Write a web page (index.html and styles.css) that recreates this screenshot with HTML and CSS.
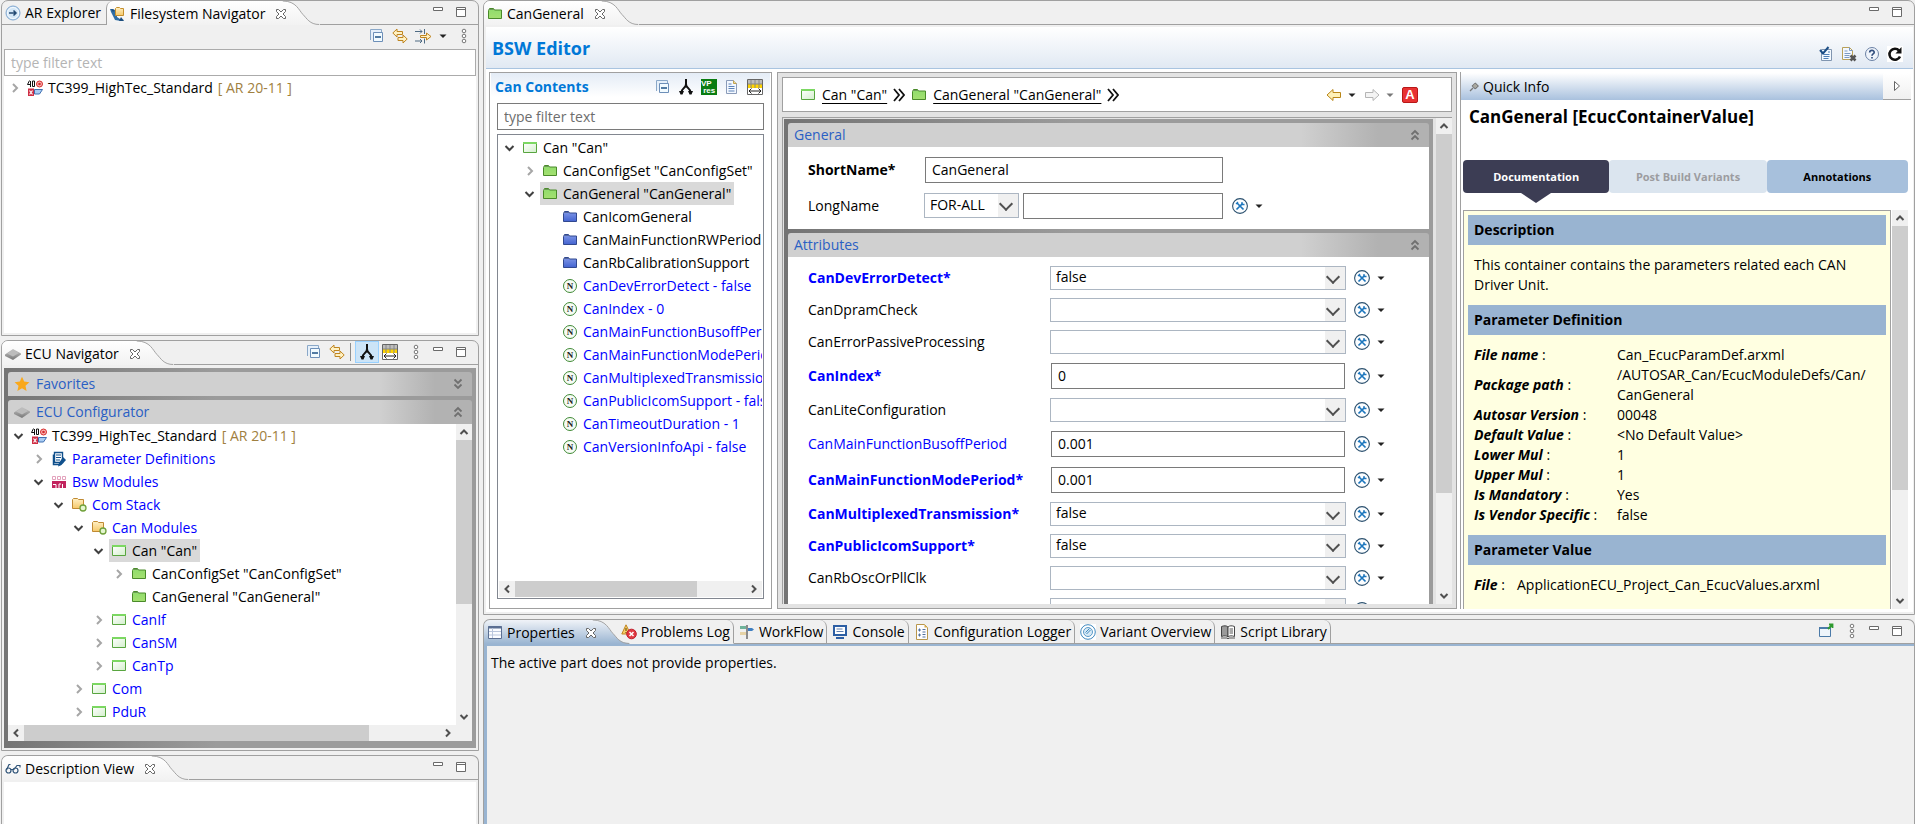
FILE: index.html
```html
<!DOCTYPE html>
<html lang="en">
<head>
<meta charset="utf-8">
<title>BSW Editor</title>
<link rel="stylesheet" href="styles.css">
</head>
<body>
<svg class="defs" aria-hidden="true">
  <defs>
    <linearGradient id="g-tab" x1="0" y1="0" x2="0" y2="1"><stop offset="0" stop-color="#fff"/><stop offset="1" stop-color="#f2f2f2"/></linearGradient>
    <linearGradient id="g-focus" x1="0" y1="0" x2="0" y2="1"><stop offset="0" stop-color="#f0f3f8"/><stop offset="1" stop-color="#99b4d1"/></linearGradient>
    <linearGradient id="g-green" x1="0" y1="0" x2="0" y2="1"><stop offset="0" stop-color="#8fdc6c"/><stop offset="1" stop-color="#a4e070"/></linearGradient>
    <linearGradient id="g-blue" x1="0" y1="0" x2="0" y2="1"><stop offset="0" stop-color="#8299e8"/><stop offset="1" stop-color="#4363d0"/></linearGradient>
    <linearGradient id="g-mod" x1="0" y1="0" x2="1" y2="1"><stop offset="0" stop-color="#fff"/><stop offset="1" stop-color="#d3efcc"/></linearGradient>
    <linearGradient id="g-yellow" x1="0" y1="0" x2="0" y2="1"><stop offset="0" stop-color="#fff0c4"/><stop offset="1" stop-color="#f5c869"/></linearGradient>
    <linearGradient id="g-chip" x1="0" y1="0" x2="0" y2="1"><stop offset="0" stop-color="#c8c8c8"/><stop offset="1" stop-color="#777"/></linearGradient>
  </defs>
  <symbol id="curve" viewBox="0 0 38 25"><path d="M0 0C14 0 17 10 21 14S28 24 38 24V25H0z" fill="url(#g-tab)"/><path d="M0 0C14 0 17 10 21 14S28 24.500 38 24.500" fill="none" stroke="#a0a0a0"/></symbol>
  <symbol id="curve-focus" viewBox="0 0 38 25"><path d="M0 0C14 0 17 10 21 14S28 24 38 24V25H0z" fill="url(#g-focus)"/><path d="M0 0C14 0 17 10 21 14S28 24.500 38 24.500" fill="none" stroke="#a0a0a0"/></symbol>
  <symbol id="close" viewBox="0 0 10 10"><path d="M.5.5h2L5 3 7.500.5h2v2L7 5l2.500 2.500v2h-2L5 7 2.500 9.500h-2v-2L3 5 .5 2.500z" fill="#fff" stroke="#666"/></symbol>
  <symbol id="min" viewBox="0 0 16 16"><path d="M3.500 3.500h9v3h-9z" fill="#fff" stroke="#6a6a6a"/></symbol>
  <symbol id="max" viewBox="0 0 16 16"><path d="M3.500 3.500h9v9h-9zM3 5.500h10" fill="#fff" stroke="#6a6a6a"/></symbol>
  <symbol id="dots" viewBox="0 0 8 16"><g fill="#fff" stroke="#777"><circle cx="4" cy="3" r="1.800"/><circle cx="4" cy="8" r="1.800"/><circle cx="4" cy="13" r="1.800"/></g></symbol>
  <symbol id="caret" viewBox="0 0 8 16"><path d="M.5 6.500h7L4 10z" fill="#222"/></symbol>
  <symbol id="caret-off" viewBox="0 0 8 16"><path d="M.5 6.500h7L4 10z" fill="#777"/></symbol>
  <symbol id="open" viewBox="0 0 17 16"><path d="M4.500 6 8.500 10 12.500 6" fill="none" stroke="#404040" stroke-width="2"/></symbol>
  <symbol id="shut" viewBox="0 0 17 16"><path d="M7 4l4 4-4 4" fill="none" stroke="#a6a6a6" stroke-width="2"/></symbol>
  <symbol id="dbl-up" viewBox="0 0 12 12"><path d="M2.500 5.500 6 2l3.500 3.500M2.500 10.500 6 7l3.500 3.500" fill="none" stroke="#707070" stroke-width="1.800"/></symbol>
  <symbol id="dbl-down" viewBox="0 0 12 12"><path d="M2.500 1.500 6 5l3.500-3.500M2.500 6.500 6 10l3.500-3.500" fill="none" stroke="#707070" stroke-width="1.800"/></symbol>
  <symbol id="su" viewBox="0 0 16 16"><path d="M4.500 10 8 6.500l3.500 3.500" fill="none" stroke="#505050" stroke-width="2"/></symbol>
  <symbol id="sd" viewBox="0 0 16 16"><path d="M4.500 6 8 9.500 11.500 6" fill="none" stroke="#505050" stroke-width="2"/></symbol>
  <symbol id="sl" viewBox="0 0 16 16"><path d="M10 4.500 6.500 8l3.500 3.500" fill="none" stroke="#505050" stroke-width="2"/></symbol>
  <symbol id="sr" viewBox="0 0 16 16"><path d="M6 4.500 9.500 8 6 11.500" fill="none" stroke="#505050" stroke-width="2"/></symbol>
  <symbol id="ar" viewBox="0 0 16 16"><circle cx="8" cy="8" r="7" fill="#d3e6f6" stroke="#7fa6cf"/><circle cx="8" cy="8" r="5.500" fill="none" stroke="#f4faff"/><path d="M4 8h7M8.500 5.500 11 8l-2.500 2.500" fill="none" stroke="#234a73" stroke-width="1.500"/></symbol>
  <symbol id="fs" viewBox="0 0 16 16"><path d="M3 3l4 3v5l3 2 4 1-3 1-6-1-2-4-2-4-1-3z" fill="#2f6ea5"/><path d="M1 3l4 1-2 2zM11 11l3 4h-5z" fill="#1c4d7d"/><path d="M5.500 9.500v-7l1-1h3l1 1h3v7z" fill="url(#g-yellow)" stroke="#c58f2c"/></symbol>
  <symbol id="collapse" viewBox="0 0 16 16"><path d="M1.500 12V1.500h11v3" fill="#e6f0fa" stroke="#8aa8c8"/><path d="M4.500 4.500h9v9h-9z" fill="#f2fbff" stroke="#6d8fb8"/><path d="M6 9h6" stroke="#1c5084" stroke-width="1.500"/></symbol>
  <symbol id="link" viewBox="0 0 16 16"><path d="M.8 5 5 1v2.500h5.500v3H5V9zM15.200 11 11 7v2.500H6v3h5V15z" fill="#fff1c2" stroke="#bf8520"/></symbol>
  <symbol id="filter" viewBox="0 0 17 16"><path d="M0 3.500h7M5 1.500l2 2-2 2M9.500 1v5M0 13h7M5 11l2 2-2 2M9.500 10.500v5" fill="none" stroke="#4f6b83"/><path d="M5.500 7.500h6V5l4.500 3.500L11.500 12V9.500h-6z" fill="#fff1c2" stroke="#bf8520"/></symbol>
  <symbol id="proj" viewBox="0 0 16 16"><path d="M7.500 9.500h8l-3 4.500h-5z" fill="#a9cdf4" stroke="#3f6fb0"/><circle cx="12.500" cy="4" r="3" fill="#f7b5b5" stroke="#d62b2b"/><circle cx="12.500" cy="4" r="1.300" fill="#d62b2b"/><path d="M1 8.500h6V16H1z" fill="#cf2f45"/><path d="M2.500 10.500l3 4M5.500 10.500l-3 4" stroke="#fff" stroke-width="1.200"/><path d="M2.500.5.5 4.500h3M3.500 1v6M5.500 1h2v5.500h-2z" fill="none" stroke="#111"/></symbol>
  <symbol id="params" viewBox="0 0 16 16"><path d="M2.500 3.500v10h7" fill="none" stroke="#10508c" stroke-width="1.500"/><path d="M3.500 1.500h8v10h-8z" fill="#fff" stroke="#10508c" stroke-width="1.400"/><path d="M5 4h5M5 6.500h5M5 9h4" stroke="#10508c" stroke-width="1.200"/><path d="M12 6l3 3-4.500 5-3.500 1.500 1-3.500z" fill="#10508c"/></symbol>
  <symbol id="bsw" viewBox="0 0 16 16"><path d="M1.500 2.500h3v3h-3zM6.500 2.500h3v3h-3zM11.500 2.500h3v3h-3z" fill="none" stroke="#e3a3bd"/><path d="M1 7h14v7H1z" fill="#c2245e"/><path d="M2 10.500h3V14M8 14v-4h2M11.500 10v4" fill="none" stroke="#fff"/></symbol>
  <symbol id="stack" viewBox="0 0 16 16"><path d="M1.500 11.500v-9l1-1h4l1 1h5v9z" fill="url(#g-yellow)" stroke="#c08a33"/><circle cx="12" cy="11" r="3" fill="#e4f6cf" stroke="#6fa03a" stroke-width="1.300"/></symbol>
  <symbol id="mod" viewBox="0 0 16 16"><path d="M1.500 3.500h13v9h-13z" fill="url(#g-mod)" stroke="#58a53f"/><path d="M1 3h14" stroke="#7cd862" stroke-width="2"/></symbol>
  <symbol id="gfold" viewBox="0 0 16 16"><path d="M1.500 12.500v-8l1-2h4l1 1.500h7v8.500z" fill="url(#g-green)" stroke="#4a8a2a"/><path d="M2 3.500h5" stroke="#6c9a58"/></symbol>
  <symbol id="bfold" viewBox="0 0 16 16"><path d="M1.500 12.500v-8l1-2h4l1 1.500h7v8.500z" fill="url(#g-blue)" stroke="#31488f"/><path d="M2 3.500h5" stroke="#56689c"/></symbol>
  <symbol id="split" viewBox="0 0 16 16"><path d="M8 0v6M8 5C8 10 3.500 8 3.500 14M8 5c0 5 4.500 3 4.500 9" fill="none" stroke="#111" stroke-width="2"/><path d="M1 12h5l-1.500 3.500h-2zM10 12h5l-1.500 3.500h-2z" fill="#111"/></symbol>
  <symbol id="table" viewBox="0 0 16 16"><path d="M.5.5h15v15H.5z" fill="#fff" stroke="#666"/><path d="M1 1h14v4H1z" fill="#bdbdbd"/><path d="M1 5h14v4H1z" fill="#ffd400"/><path d="M4 1v8M8 1v8M12 1v8M1 5h14" stroke="#888"/><path d="M1 9h14v6H1z" fill="#fff"/><path d="M2 12h12M4.500 9.500 2 12l2.500 2.500M11.500 9.500 14 12l-2.500 2.500" fill="none" stroke="#222"/></symbol>
  <symbol id="page" viewBox="0 0 16 16"><path d="M2.500 1.500h7l3 3v10h-10z" fill="#f3f8ff" stroke="#8a9bb8"/><path d="M9.500 1.500v3h3" fill="#f5dc8c" stroke="#c2a350"/><path d="M4.500 5h3M4.500 7.500h6M4.500 9.500h6M4.500 12h6" stroke="#5c83b8"/></symbol>
  <symbol id="star" viewBox="0 0 16 16"><path d="M8 .8l2.200 4.800 5.200.6-3.900 3.500 1.100 5.200L8 12.300l-4.600 2.600 1.100-5.200L.6 6.200l5.200-.6z" fill="#f9a81b"/></symbol>
  <symbol id="chip" viewBox="0 0 16 16"><path d="M0 8.500 8 3l8 4.500v1L8 14 0 10z" fill="url(#g-chip)"/><path d="M2 7.500 8 3.500l6 3.500-6 3.500z" fill="#bcbcbc"/></symbol>
  <symbol id="glasses" viewBox="0 0 16 16"><path d="M1.500 9 4 3.500h1.500M8.500 9 12 4.500h3v2" fill="none" stroke="#2f5378" stroke-width="1.200"/><circle cx="3.500" cy="9.500" r="2.500" fill="none" stroke="#2f5378" stroke-width="1.200"/><circle cx="10.500" cy="9.500" r="2.500" fill="none" stroke="#2f5378" stroke-width="1.200"/><path d="M6 8.500h2" stroke="#2f5378"/></symbol>
  <symbol id="tools" viewBox="0 0 16 16"><circle cx="8" cy="8" r="7.400" fill="#fbfdff" stroke="#2b506e" stroke-width="1.100"/><path d="M5 5l6.500 6.500M4.500 11.500 10.500 5.500" stroke="#1c76bd" stroke-width="1.700"/><path d="M4 6 6 4M10 4v2.500h2.500" fill="none" stroke="#1c76bd" stroke-width="1.300"/></symbol>
  <symbol id="back" viewBox="0 0 16 16"><path d="M1 8l6-5.500v3h7.500v5H7v3z" fill="#fff1b8" stroke="#b98618"/></symbol>
  <symbol id="fwd" viewBox="0 0 16 16"><path d="M15 8 9 2.500v3H1.500v5H9v3z" fill="#f4f4f4" stroke="#b5b5b5"/></symbol>
  <symbol id="raquo" viewBox="0 0 12 16"><path d="M1 2l5 6-5 6M6 2l5 6-5 6" fill="none" stroke="#111" stroke-width="1.800"/></symbol>
  <symbol id="check" viewBox="0 0 16 16"><path d="M3.500 3.500h10v11h-10z" fill="#f4faff" stroke="#8095b0"/><path d="M5.500 8.500h6M5.500 10.500h6M5.500 12.500h5M10 6h2" stroke="#4f7fb5"/><path d="M2 4l3 3.500L10.500 1" fill="none" stroke="#1d4f86" stroke-width="2"/></symbol>
  <symbol id="pagex" viewBox="0 0 16 16"><path d="M1.500 1.500h7l3 3v9h-10z" fill="#f3f8ff" stroke="#b9a15a"/><path d="M8.500 1.500v3h3M3.500 5h3M3.500 7.500h6M3.500 9.500h5M3.500 11.500h5" fill="none" stroke="#7c9ac2"/><path d="M9.500 9.500l5 5M14.500 9.500l-5 5" stroke="#555" stroke-width="2.600"/></symbol>
  <symbol id="help" viewBox="0 0 16 16"><circle cx="8" cy="8" r="6.500" fill="#eff4fb" stroke="#6a80a4"/><path d="M5.700 6.500C5.700 3.700 10.200 3.700 10.200 6.300 10.200 8 8 7.800 8 9.800M8 11v1.500" fill="none" stroke="#33507f" stroke-width="1.700"/></symbol>
  <symbol id="reload" viewBox="0 0 16 16"><path d="M0 0h16v16H0z" fill="#fff"/><path d="M12 4.500A5.500 5.500 0 1 0 13 10.500" fill="none" stroke="#111" stroke-width="2.600"/><path d="M14.500 1v6.500H8.500z" fill="#111"/></symbol>
  <symbol id="pin" viewBox="0 0 10 10"><path d="M1 9l3-3M3 3.500 6.500 7M3.500 4 6 1.500M6.500 6.500 9 4M6 1l3.500 3.500" fill="none" stroke="#777" stroke-width="1.300"/><path d="M4 4l2-2.500L8.500 4 6 6z" fill="#a9a9a0"/></symbol>
  <symbol id="play" viewBox="0 0 8 12"><path d="M1.500 1.500 6.500 6l-5 4.500z" fill="#fff" stroke="#666"/></symbol>
  <symbol id="props" viewBox="0 0 16 16"><path d="M1.500 1.500h13v12h-13z" fill="#fafcff" stroke="#5b6f92"/><path d="M1 2.500h14" stroke="#5b6f92" stroke-width="2"/><path d="M5.500 3v10M2 6.500h12M2 10h12" stroke="#b9c6dd"/></symbol>
  <symbol id="problems" viewBox="0 0 16 16"><path d="M5 .8 9.500 10H.8z" fill="#f8d06a" stroke="#bf8520"/><path d="M5 4v3M5 8v1" stroke="#5b3c00"/><circle cx="10.500" cy="10" r="4.800" fill="#e03a42" stroke="#c11f2c"/><path d="M8.500 8l4 4M12.500 8l-4 4" stroke="#fff" stroke-width="1.500"/></symbol>
  <symbol id="flow" viewBox="0 0 16 16"><path d="M7 1h2v14H7z" fill="#8b8b8b"/><path d="M1 2h6v3H1z" fill="#6fb39a"/><path d="M9 4h4l2 1.500L13 7H9z" fill="#3f7fc1"/><path d="M1 8h6v3H1z" fill="#e6d3a6"/></symbol>
  <symbol id="console" viewBox="0 0 16 16"><path d="M2 2h12v9H2z" fill="#fff" stroke="#2d5fa4" stroke-width="2"/><path d="M4.500 5h6M4.500 7.500h7" stroke="#5f7fae"/><path d="M4 14h8" stroke="#2d5fa4" stroke-width="2"/></symbol>
  <symbol id="logger" viewBox="0 0 16 16"><path d="M2.500.5h8l3 3v12h-11z" fill="#fdfdff" stroke="#b8964a"/><path d="M10.500.5v3h3z" fill="#d8ab4a"/><path d="M4 6h3M5.500 4.500v3M4 11h3M5.500 9.500v3M8.500 5.500h3M8.500 8h3M8.500 10.500h3M8.500 13h3" stroke="#51709c"/></symbol>
  <symbol id="variant" viewBox="0 0 16 16"><path d="M0 0h16v16H0z" fill="#fff"/><circle cx="8" cy="8" r="7.300" fill="none" stroke="#3d87bd"/><circle cx="8" cy="8" r="4.500" fill="#d7eaf6" stroke="#5c9bc9"/><path d="M5.500 8.500l4-4M6.500 10l4-4" stroke="#3d87bd"/></symbol>
  <symbol id="script" viewBox="0 0 16 16"><path d="M1.500 2.500C4 1.500 6.500 1.500 8 3v10c-1.500-1.500-4-1.500-6.500-.5z" fill="#9a9a9a" stroke="#444"/><path d="M14.500 2.500C12 1.500 9.500 1.500 8 3v10c1.500-1.500 4-1.500 6.500-.5z" fill="#fff" stroke="#444"/><path d="M9.500 5h3.500M9.500 7h3.500M9.500 9h3.500" stroke="#555"/><path d="M1 14h6l1 1 1-1h6" fill="none" stroke="#555"/></symbol>
  <symbol id="newwin" viewBox="0 0 16 16"><path d="M1.500 4.500h11v9h-11z" fill="#eef5fb" stroke="#4b7aa8"/><path d="M1 5h12" stroke="#4b7aa8" stroke-width="2"/><path d="M10 6l4-4M11 1.500h3.500V5" fill="none" stroke="#2f9a2f" stroke-width="1.800"/></symbol>
</svg>

<div class="workbench">
  <aside class="side">
    <section class="panel">
      <header class="tabs">
        <button class="tab idle first"><svg class="i"><use href="#ar"/></svg>AR Explorer</button>
        <button class="tab on inner"><svg class="i"><use href="#fs"/></svg>Filesystem Navigator<svg class="x"><use href="#close"/></svg></button>
        <svg class="curve"><use href="#curve"/></svg>
        <div class="rest"><button aria-label="Minimize"><svg class="i"><use href="#min"/></svg></button><button aria-label="Maximize"><svg class="i"><use href="#max"/></svg></button></div>
      </header>
      <div class="toolbar">
        <button aria-label="Collapse all"><svg class="i"><use href="#collapse"/></svg></button>
        <button aria-label="Link with editor"><svg class="i"><use href="#link"/></svg></button>
        <button class="drop" aria-label="Filters"><svg class="i17"><use href="#filter"/></svg><svg class="c"><use href="#caret"/></svg></button>
        <button class="more" aria-label="View menu"><svg class="c"><use href="#dots"/></svg></button>
      </div>
      <div class="view">
        <input class="field pale" aria-label="Filter files" placeholder="type filter text">
        <ul class="tree grow">
          <li><div class="row"><svg class="t"><use href="#shut"/></svg><span class="lab"><svg class="i"><use href="#proj"/></svg>TC399_HighTec_Standard <em>[ AR 20-11 ]</em></span></div></li>
        </ul>
      </div>
    </section>

    <section class="panel">
      <header class="tabs">
        <button class="tab on"><svg class="i"><use href="#chip"/></svg>ECU Navigator<svg class="x"><use href="#close"/></svg></button>
        <svg class="curve"><use href="#curve"/></svg>
        <div class="rest"><button aria-label="Collapse all"><svg class="i"><use href="#collapse"/></svg></button><button class="lnk" aria-label="Link with editor"><svg class="i"><use href="#link"/></svg></button><span class="bar"></span><button class="pressed" aria-label="Tree layout"><svg class="i"><use href="#split"/></svg></button><button class="tbl" aria-label="Fit columns"><svg class="i"><use href="#table"/></svg></button><button class="menu" aria-label="View menu"><svg class="c"><use href="#dots"/></svg></button><button aria-label="Minimize"><svg class="i"><use href="#min"/></svg></button><button aria-label="Maximize"><svg class="i"><use href="#max"/></svg></button></div>
      </header>
      <div class="frame">
        <h3 class="sec"><svg class="i"><use href="#star"/></svg><span>Favorites</span><svg class="d"><use href="#dbl-down"/></svg></h3>
        <div class="fold grow">
          <h3 class="sec"><svg class="i"><use href="#chip"/></svg><span>ECU Configurator</span><svg class="d"><use href="#dbl-up"/></svg></h3>
          <div class="scroller grow">
            <ul class="tree grow">
              <li><div class="row"><svg class="t"><use href="#open"/></svg><span class="lab"><svg class="i"><use href="#proj"/></svg>TC399_HighTec_Standard <em>[ AR 20-11 ]</em></span></div>
                <ul>
                  <li><div class="row blue"><svg class="t"><use href="#shut"/></svg><span class="lab"><svg class="i"><use href="#params"/></svg>Parameter Definitions</span></div></li>
                  <li><div class="row blue"><svg class="t"><use href="#open"/></svg><span class="lab"><svg class="i"><use href="#bsw"/></svg>Bsw Modules</span></div>
                    <ul>
                      <li><div class="row blue"><svg class="t"><use href="#open"/></svg><span class="lab"><svg class="i"><use href="#stack"/></svg>Com Stack</span></div>
                        <ul>
                          <li><div class="row blue"><svg class="t"><use href="#open"/></svg><span class="lab"><svg class="i"><use href="#stack"/></svg>Can Modules</span></div>
                            <ul>
                              <li><div class="row"><svg class="t"><use href="#open"/></svg><span class="lab sel"><svg class="i"><use href="#mod"/></svg>Can "Can"</span></div>
                                <ul>
                                  <li><div class="row"><svg class="t"><use href="#shut"/></svg><span class="lab"><svg class="i"><use href="#gfold"/></svg>CanConfigSet "CanConfigSet"</span></div></li>
                                  <li><div class="row"><svg class="t"></svg><span class="lab"><svg class="i"><use href="#gfold"/></svg>CanGeneral "CanGeneral"</span></div></li>
                                </ul>
                              </li>
                              <li><div class="row blue"><svg class="t"><use href="#shut"/></svg><span class="lab"><svg class="i"><use href="#mod"/></svg>CanIf</span></div></li>
                              <li><div class="row blue"><svg class="t"><use href="#shut"/></svg><span class="lab"><svg class="i"><use href="#mod"/></svg>CanSM</span></div></li>
                              <li><div class="row blue"><svg class="t"><use href="#shut"/></svg><span class="lab"><svg class="i"><use href="#mod"/></svg>CanTp</span></div></li>
                            </ul>
                          </li>
                          <li><div class="row blue"><svg class="t"><use href="#shut"/></svg><span class="lab"><svg class="i"><use href="#mod"/></svg>Com</span></div></li>
                          <li><div class="row blue"><svg class="t"><use href="#shut"/></svg><span class="lab"><svg class="i"><use href="#mod"/></svg>PduR</span></div></li>
                        </ul>
                      </li>
                    </ul>
                  </li>
                </ul>
              </li>
            </ul>
            <div class="vs"><svg class="i"><use href="#su"/></svg><div class="track"><div class="thumb v60"></div></div><svg class="i"><use href="#sd"/></svg></div>
          </div>
          <div class="hs corner"><svg class="i"><use href="#sl"/></svg><div class="track"><div class="thumb h83"></div></div><svg class="i"><use href="#sr"/></svg></div>
        </div>
      </div>
    </section>

    <section class="panel cut">
      <header class="tabs">
        <button class="tab on"><svg class="i"><use href="#glasses"/></svg>Description View<svg class="x"><use href="#close"/></svg></button>
        <svg class="curve"><use href="#curve"/></svg>
        <div class="rest"><button aria-label="Minimize"><svg class="i"><use href="#min"/></svg></button><button aria-label="Maximize"><svg class="i"><use href="#max"/></svg></button></div>
      </header>
      <div class="view blank"></div>
    </section>
  </aside>

  <main class="main">
    <section class="panel">
      <header class="tabs">
        <button class="tab on"><svg class="i"><use href="#gfold"/></svg>CanGeneral<svg class="x"><use href="#close"/></svg></button>
        <svg class="curve"><use href="#curve"/></svg>
        <div class="rest"><button aria-label="Minimize"><svg class="i"><use href="#min"/></svg></button><button aria-label="Maximize"><svg class="i"><use href="#max"/></svg></button></div>
      </header>
      <div class="editor">
        <div class="title"><h1>BSW Editor</h1>
          <button aria-label="Validate"><svg class="i"><use href="#check"/></svg></button><button aria-label="Clear results"><svg class="i"><use href="#pagex"/></svg></button><button aria-label="Help"><svg class="i"><use href="#help"/></svg></button><button aria-label="Refresh"><svg class="i"><use href="#reload"/></svg></button>
        </div>
        <div class="columns">
          <section class="contents">
            <header><h2>Can Contents</h2>
              <button aria-label="Collapse all"><svg class="i"><use href="#collapse"/></svg></button><button aria-label="Tree layout"><svg class="i"><use href="#split"/></svg></button><button class="vp" title="Variation points">VP<br>&nbsp;res</button><button aria-label="Show description"><svg class="i"><use href="#page"/></svg></button><button aria-label="Fit columns"><svg class="i"><use href="#table"/></svg></button>
            </header>
            <input class="field" aria-label="Filter contents" placeholder="type filter text">
            <div class="treebox grow">
              <ul class="tree grow">
                <li><div class="row"><svg class="t"><use href="#open"/></svg><span class="lab"><svg class="i"><use href="#mod"/></svg>Can "Can"</span></div>
                  <ul>
                    <li><div class="row"><svg class="t"><use href="#shut"/></svg><span class="lab"><svg class="i"><use href="#gfold"/></svg>CanConfigSet "CanConfigSet"</span></div></li>
                    <li><div class="row"><svg class="t"><use href="#open"/></svg><span class="lab sel"><svg class="i"><use href="#gfold"/></svg>CanGeneral "CanGeneral"</span></div>
                      <ul>
                        <li><div class="row"><svg class="t"></svg><span class="lab"><svg class="i"><use href="#bfold"/></svg>CanIcomGeneral</span></div></li>
                        <li><div class="row"><svg class="t"></svg><span class="lab"><svg class="i"><use href="#bfold"/></svg>CanMainFunctionRWPeriod</span></div></li>
                        <li><div class="row"><svg class="t"></svg><span class="lab"><svg class="i"><use href="#bfold"/></svg>CanRbCalibrationSupport</span></div></li>
                        <li><div class="row blue"><svg class="t"></svg><span class="lab"><i class="n">N</i>CanDevErrorDetect - false</span></div></li>
                        <li><div class="row blue"><svg class="t"></svg><span class="lab"><i class="n">N</i>CanIndex - 0</span></div></li>
                        <li><div class="row blue"><svg class="t"></svg><span class="lab"><i class="n">N</i>CanMainFunctionBusoffPeriod</span></div></li>
                        <li><div class="row blue"><svg class="t"></svg><span class="lab"><i class="n">N</i>CanMainFunctionModePeriod</span></div></li>
                        <li><div class="row blue"><svg class="t"></svg><span class="lab"><i class="n">N</i>CanMultiplexedTransmission</span></div></li>
                        <li><div class="row blue"><svg class="t"></svg><span class="lab"><i class="n">N</i>CanPublicIcomSupport - false</span></div></li>
                        <li><div class="row blue"><svg class="t"></svg><span class="lab"><i class="n">N</i>CanTimeoutDuration - 1</span></div></li>
                        <li><div class="row blue"><svg class="t"></svg><span class="lab"><i class="n">N</i>CanVersionInfoApi - false</span></div></li>
                      </ul>
                    </li>
                  </ul>
                </li>
              </ul>
              <div class="hs"><svg class="i"><use href="#sl"/></svg><div class="track"><div class="thumb h78"></div></div><svg class="i"><use href="#sr"/></svg></div>
            </div>
          </section>

          <section class="details">
            <nav class="crumbs">
              <svg class="i"><use href="#mod"/></svg><a href="#can">Can "Can"</a><svg class="q"><use href="#raquo"/></svg>
              <svg class="i"><use href="#gfold"/></svg><a href="#cangeneral">CanGeneral "CanGeneral"</a><svg class="q"><use href="#raquo"/></svg>
              <span class="grow"></span>
              <button class="hist" aria-label="Back"><svg class="i"><use href="#back"/></svg><svg class="c"><use href="#caret"/></svg></button>
              <button class="hist" aria-label="Forward"><svg class="i"><use href="#fwd"/></svg><svg class="c"><use href="#caret-off"/></svg></button>
              <button class="spec" title="AUTOSAR specification">A</button>
            </nav>
            <div class="formwrap grow">
              <div class="frame formframe grow">
                <div class="fold">
                  <h3 class="sec"><span>General</span><svg class="d"><use href="#dbl-up"/></svg></h3>
                  <div class="form general">
                    <label class="req" for="short">ShortName*</label><div class="ctl"><input id="short" value="CanGeneral"></div><span></span>
                    <label for="long">LongName</label><div class="ctl duo"><div class="pick"><select aria-label="Language"><option>FOR-ALL</option></select></div><input id="long"></div><button class="tool" aria-label="LongName options"><svg class="i"><use href="#tools"/></svg><svg class="c"><use href="#caret"/></svg></button>
                  </div>
                </div>
                <div class="fold grow">
                  <h3 class="sec"><span>Attributes</span><svg class="d"><use href="#dbl-up"/></svg></h3>
                  <div class="form attrs">
                    <label class="set" for="a1">CanDevErrorDetect*</label><div class="pick"><select id="a1"><option>false</option><option>true</option></select></div><button class="tool" aria-label="CanDevErrorDetect options"><svg class="i"><use href="#tools"/></svg><svg class="c"><use href="#caret"/></svg></button>
                    <label for="a2">CanDpramCheck</label><div class="pick"><select id="a2"><option></option></select></div><button class="tool" aria-label="CanDpramCheck options"><svg class="i"><use href="#tools"/></svg><svg class="c"><use href="#caret"/></svg></button>
                    <label for="a3">CanErrorPassiveProcessing</label><div class="pick"><select id="a3"><option></option></select></div><button class="tool" aria-label="CanErrorPassiveProcessing options"><svg class="i"><use href="#tools"/></svg><svg class="c"><use href="#caret"/></svg></button>
                    <label class="set" for="a4">CanIndex*</label><div class="ctl"><input id="a4" value="0"></div><button class="tool" aria-label="CanIndex options"><svg class="i"><use href="#tools"/></svg><svg class="c"><use href="#caret"/></svg></button>
                    <label for="a5">CanLiteConfiguration</label><div class="pick"><select id="a5"><option></option></select></div><button class="tool" aria-label="CanLiteConfiguration options"><svg class="i"><use href="#tools"/></svg><svg class="c"><use href="#caret"/></svg></button>
                    <label class="opt" for="a6">CanMainFunctionBusoffPeriod</label><div class="ctl"><input id="a6" value="0.001"></div><button class="tool" aria-label="CanMainFunctionBusoffPeriod options"><svg class="i"><use href="#tools"/></svg><svg class="c"><use href="#caret"/></svg></button>
                    <label class="set" for="a7">CanMainFunctionModePeriod*</label><div class="ctl"><input id="a7" value="0.001"></div><button class="tool" aria-label="CanMainFunctionModePeriod options"><svg class="i"><use href="#tools"/></svg><svg class="c"><use href="#caret"/></svg></button>
                    <label class="set" for="a8">CanMultiplexedTransmission*</label><div class="pick"><select id="a8"><option>false</option><option>true</option></select></div><button class="tool" aria-label="CanMultiplexedTransmission options"><svg class="i"><use href="#tools"/></svg><svg class="c"><use href="#caret"/></svg></button>
                    <label class="set" for="a9">CanPublicIcomSupport*</label><div class="pick"><select id="a9"><option>false</option><option>true</option></select></div><button class="tool" aria-label="CanPublicIcomSupport options"><svg class="i"><use href="#tools"/></svg><svg class="c"><use href="#caret"/></svg></button>
                    <label for="a10">CanRbOscOrPllClk</label><div class="pick"><select id="a10"><option></option></select></div><button class="tool" aria-label="CanRbOscOrPllClk options"><svg class="i"><use href="#tools"/></svg><svg class="c"><use href="#caret"/></svg></button>
                    <span></span><div class="pick"><select aria-label="Next attribute"><option></option></select></div><button class="tool" aria-label="Attribute options"><svg class="i"><use href="#tools"/></svg></button>
                  </div>
                </div>
              </div>
              <div class="vs"><svg class="i"><use href="#su"/></svg><div class="track"><div class="thumb v79"></div></div><svg class="i"><use href="#sd"/></svg></div>
            </div>
          </section>

          <section class="quick">
            <header><h2><svg class="x"><use href="#pin"/></svg>Quick Info</h2><button aria-label="Collapse quick info"><svg class="c"><use href="#play"/></svg></button></header>
            <h4>CanGeneral [EcucContainerValue]</h4>
            <div class="pills"><button class="doc">Documentation</button><button class="pbv" disabled>Post Build Variants</button><button class="ann">Annotations</button></div>
            <div class="info grow">
              <div class="note grow">
                <h5>Description</h5>
                <p>This container contains the parameters related each CAN Driver Unit.</p>
                <h5>Parameter Definition</h5>
                <table>
                  <tr><th><b>File name</b> :</th><td>Can_EcucParamDef.arxml</td></tr>
                  <tr><th><b>Package path</b> :</th><td>/AUTOSAR_Can/EcucModuleDefs/Can/<wbr>CanGeneral</td></tr>
                  <tr><th><b>Autosar Version</b> :</th><td>00048</td></tr>
                  <tr><th><b>Default Value</b> :</th><td>&lt;No Default Value&gt;</td></tr>
                  <tr><th><b>Lower Mul</b> :</th><td>1</td></tr>
                  <tr><th><b>Upper Mul</b> :</th><td>1</td></tr>
                  <tr><th><b>Is Mandatory</b> :</th><td>Yes</td></tr>
                  <tr><th><b>Is Vendor Specific</b> :</th><td>false</td></tr>
                </table>
                <h5>Parameter Value</h5>
                <table class="short">
                  <tr><th><b>File</b> :</th><td>ApplicationECU_Project_Can_EcucValues.arxml</td></tr>
                </table>
              </div>
              <div class="vs"><svg class="i"><use href="#su"/></svg><div class="track"><div class="thumb v72"></div></div><svg class="i"><use href="#sd"/></svg></div>
            </div>
          </section>
        </div>
      </div>
    </section>

    <section class="panel focus cut">
      <header class="tabs">
        <button class="tab on"><svg class="i"><use href="#props"/></svg>Properties<svg class="x"><use href="#close"/></svg></button>
        <svg class="curve"><use href="#curve-focus"/></svg>
        <button class="tab idle next"><svg class="i"><use href="#problems"/></svg>Problems Log</button>
        <button class="tab idle"><svg class="i"><use href="#flow"/></svg>WorkFlow</button>
        <button class="tab idle"><svg class="i"><use href="#console"/></svg>Console</button>
        <button class="tab idle"><svg class="i"><use href="#logger"/></svg>Configuration Logger</button>
        <button class="tab idle"><svg class="i"><use href="#variant"/></svg>Variant Overview</button>
        <button class="tab idle"><svg class="i"><use href="#script"/></svg>Script Library</button>
        <div class="rest"><button aria-label="New view"><svg class="i"><use href="#newwin"/></svg></button><button class="menu" aria-label="View menu"><svg class="c"><use href="#dots"/></svg></button><button aria-label="Minimize"><svg class="i"><use href="#min"/></svg></button><button aria-label="Maximize"><svg class="i"><use href="#max"/></svg></button></div>
      </header>
      <p class="empty">The active part does not provide properties.</p>
    </section>
  </main>
</div>
</body>
</html>
```

FILE: styles.css
```css
* { box-sizing: border-box; }

body, h1, h2, h3, h4, h5, p, ul { margin: 0; padding: 0; }

body {
  background: #f0f0f0;
  color: #000;
  font: 14px/20px "Open Sans", "Noto Sans", sans-serif;
}

button, input, select { font: inherit; color: inherit; }
button {
  display: flex;
  align-items: center;
  padding: 0;
  border: 0;
  background: none;
}
ul { list-style: none; }
svg { flex: none; display: block; }

.defs { position: absolute; width: 0; height: 0; }
.i { width: 16px; height: 16px; }
.i17 { width: 17px; height: 16px; }
.t { width: 17px; height: 16px; }
.c { width: 8px; height: 16px; }
.d { width: 12px; height: 12px; }
.q { width: 12px; height: 16px; }
.x { width: 10px; height: 10px; }
.grow { flex: 1; min-width: 0; min-height: 0; }

/* Workbench */
.workbench {
  display: grid;
  grid-template-columns: 478px 1fr;
  gap: 4px;
  height: 100vh;
  padding-left: 1px;
}
.side, .main { display: grid; gap: 4px; min-width: 0; min-height: 0; }
.side { grid-template-rows: 336fr 411fr 69fr; }
.main { grid-template-rows: 615fr 205fr; }

.panel {
  display: flex;
  flex-direction: column;
  min-width: 0;
  min-height: 0;
  overflow: hidden;
  border: 1px solid #a0a0a0;
  border-radius: 7px 7px 0 0;
}
.panel.cut { border-bottom: 0; }

/* Tabs */
.tabs { display: flex; flex: none; height: 24px; white-space: nowrap; }
.tab { gap: 4px; padding: 1px 3px 0; }
.tab.on { background: linear-gradient(#fff, #f2f2f2); padding-right: 0; }
.tab.on .x { position: relative; z-index: 1; margin-left: 7px; }
.tab.idle { border-bottom: 1px solid #a0a0a0; }
.tab.first { padding-right: 5px; }
.tab.inner { border-left: 1px solid #a0a0a0; border-radius: 7px 0 0 0; }
.curve { width: 38px; height: 24px; margin-left: -4px; }
.rest {
  display: flex;
  flex: 1;
  justify-content: flex-end;
  align-items: center;
  gap: 7px;
  padding: 0 9px 2px 0;
  border-bottom: 1px solid #a0a0a0;
}
.rest .menu { margin: 0 3px 0 7px; }
.rest .bar { width: 1px; height: 18px; background: #8c8c8c; margin: 0 -2px; }
.rest .pressed { width: 22px; height: 20px; justify-content: center; background: #cce4f7; outline: 1px solid #99d1ff; }
.rest .tbl { margin-left: -3px; }

.focus .tabs { border-bottom: 2px solid #99b4d1; height: 26px; }
.focus .tab.on { background: linear-gradient(#f0f3f8, #99b4d1); }
.focus .tab.idle { border-right: 1px solid #a0a0a0; border-radius: 0 7px 0 0; padding-left: 5px; }
.focus .tab.next { margin-left: -14px; border-bottom-color: transparent; }
.focus { box-shadow: inset 3px 0 #99b4d1; }
.empty { padding: 7px 7px 0; }

.toolbar {
  display: flex;
  flex: none;
  justify-content: flex-end;
  gap: 7px;
  height: 24px;
  padding: 3px 10px 0 0;
}
.toolbar button { height: 16px; }
.drop { gap: 7px; }
.more { margin-left: 6px; }

.view { display: flex; flex: 1; flex-direction: column; min-height: 0; margin: 0 2px 2px; background: #fff; }
.blank { margin: 2px 2px 0; }

.field { width: 100%; height: 27px; padding: 0 6px; border: 1px solid #7a7a7a; background: #fff; }
.field::placeholder { color: #6d6d6d; opacity: 1; }
.pale { border-color: #ababab; }
.pale::placeholder { color: #b4b4b4; }

/* Trees */
.tree { overflow: hidden; background: #fff; white-space: nowrap; }
.tree ul { padding-left: 20px; }
.row { display: flex; align-items: center; gap: 2px; height: 23px; padding-left: 2px; }
.lab { display: flex; align-items: center; gap: 5px; height: 23px; padding: 0 3px 0 2px; }
.lab em { color: #a08040; font-style: normal; }
.sel { background: #d9d9d9; }
.blue { color: #0000ff; }
.n {
  width: 14px;
  height: 14px;
  margin: 0 1px;
  border: 1px solid #3f8a35;
  border-radius: 50%;
  background: #f7fcf5;
  color: #222;
  font: 700 9px/12px "Liberation Serif", serif;
  text-align: center;
}

/* Scroll bars */
.vs, .hs { display: flex; flex: none; background: #f0f0f0; }
.vs { flex-direction: column; width: 16px; }
.hs { height: 16px; }
.corner { padding-right: 16px; }
.track { flex: 1; min-width: 0; min-height: 0; }
.thumb { background: #cdcdcd; height: 100%; }
.v60 { height: 61%; }
.v72 { height: 72%; }
.v79 { height: 79%; }
.h78 { width: 79%; }
.h83 { width: 83%; }

/* Folding sections on a grey frame */
.frame {
  display: flex;
  flex: 1;
  flex-direction: column;
  gap: 4px;
  min-height: 0;
  margin: 3px 2px 2px;
  padding: 4px 4px 7px;
  background: linear-gradient(90deg, #747474, #9b9b9b 45%);
}
.fold { display: flex; flex-direction: column; }
.sec {
  display: flex;
  flex: none;
  align-items: center;
  gap: 6px;
  height: 24px;
  padding: 0 8px 0 6px;
  border-radius: 3px 3px 0 0;
  background: linear-gradient(90deg, #d0d0d0 80%, #b2b2b2 92%);
  color: #2a5fc4;
  font-weight: 400;
  font-size: 14px;
}
.sec span { flex: 1; }
.scroller { display: flex; background: #fff; }

/* Editor */
.editor { display: flex; flex: 1; flex-direction: column; min-height: 0; margin: 2px 1px 2px 2px; background: #fff; }
.title {
  display: flex;
  flex: none;
  align-items: center;
  gap: 7px;
  height: 42px;
  padding: 0 10px 0 6px;
  border-bottom: 1px solid #a9c4e0;
  background: linear-gradient(#fff, #e1e9f3);
}
.title h1 { flex: 1; color: #0078d7; font-size: 18px; line-height: 24px; }
.title button { padding-top: 12px; }
.columns { display: grid; grid-template-columns: 283px 1fr 451px; flex: 1; min-height: 0; margin: 3px 2px 3px 3px; }

.contents { display: flex; flex-direction: column; min-height: 0; padding: 0 7px 9px; border: 1px solid #a0a0a0; }
.contents header {
  display: flex;
  flex: none;
  align-items: center;
  gap: 7px;
  height: 30px;
  margin: 0 -6px;
  padding: 0 7px 2px 4px;
  background: linear-gradient(#e4ecf6, #fff 80%);
}
.contents h2 { flex: 1; color: #0078d7; font-size: 14px; }
.vp {
  flex: none;
  width: 16px;
  height: 16px;
  background: #0a7d12;
  color: #fff;
  font: 700 8px/7px "Liberation Sans", sans-serif;
  text-align: left;
}
.treebox { display: flex; flex-direction: column; margin-top: 4px; padding: 1px; border: 1px solid #828790; }

.details { display: flex; flex-direction: column; min-width: 0; min-height: 0; margin: 0 3px 0 5px; padding: 4px; border: 1px solid #a0a0a0; background: #e3e3e3; }
.crumbs { display: flex; flex: none; align-items: center; gap: 6px; height: 35px; padding: 0 33px 0 17px; border: 1px solid #a0a0a0; background: #fff; white-space: nowrap; }
.crumbs a { color: #000; text-underline-offset: 3px; }
.hist { gap: 6px; margin-right: 2px; }
.spec {
  justify-content: center;
  width: 16px;
  height: 16px;
  border: 1px solid #b81818;
  border-radius: 2px;
  background: #e83232;
  color: #fff;
  font: 700 13px/14px "Liberation Sans", sans-serif;
}
.formwrap { display: flex; gap: 3px; margin-top: 5px; border-top: 1px solid #a0a0a0; border-left: 1px solid #a0a0a0; }
.formframe { margin: 1px 0 0 1px; padding-bottom: 0; overflow: hidden; }
.form { display: grid; row-gap: 8px; align-items: center; padding: 9px 0 9px 20px; background: #fff; }
.form label { white-space: nowrap; }
.req { font-weight: 700; }
.set { color: #00f; font-weight: 700; }
.opt { color: #00f; }
.general { grid-template-columns: 116px minmax(0, 300px) 40px; column-gap: 0; }
.general .tool { margin-left: 8px; }
.attrs { grid-template-columns: 234px 1fr 32px; column-gap: 8px; padding-right: 43px; }
.ctl { display: flex; gap: 4px; height: 28px; padding: 1px; }
.ctl input { flex: 1; min-width: 0; padding: 0 6px; border: 1px solid #7a7a7a; background: #fff; }
.duo { padding-left: 0; }
.duo .pick { width: 95px; }
.pick { position: relative; height: 24px; }
.duo .pick { height: 25px; }
.pick select {
  display: block;
  width: 100%;
  height: 100%;
  padding: 0 24px 2px 5px;
  border: 1px solid #acb6c2;
  border-radius: 0;
  background: #fff;
  appearance: none;
}
.pick::before {
  content: "";
  position: absolute;
  top: 1px;
  right: 1px;
  bottom: 1px;
  width: 20px;
  background: #f0f0f0;
  pointer-events: none;
}
.pick::after {
  content: "";
  position: absolute;
  top: 6px;
  right: 8px;
  width: 8px;
  height: 8px;
  border: solid #505050;
  border-width: 0 2px 2px 0;
  transform: rotate(45deg);
  pointer-events: none;
}
.tool { gap: 7px; }

/* Quick info */
.quick { display: flex; flex-direction: column; min-height: 0; padding: 0 3px 0 2px; border-left: 1px solid #a0a0a0; }
.quick header { display: flex; flex: none; height: 27px; margin: 1px -3px 0 -2px; }
.quick h2 { display: flex; flex: 1; align-items: center; gap: 4px; padding-left: 8px; background: linear-gradient(#fff, #a9c1de); font-size: 14px; font-weight: 400; }
.quick header button { width: 28px; justify-content: center; border-bottom: 1px solid #a0a0a0; background: linear-gradient(#fff, #f0f0f0); }
.quick header .c { height: 12px; }
.quick h4 { padding: 5px 6px 0; font-size: 17px; line-height: 24px; }
.pills { display: grid; grid-template-columns: 146fr 157fr 141fr; flex: none; height: 33px; margin-top: 31px; font-size: 11px; font-weight: 700; }
.pills button { position: relative; justify-content: center; border-radius: 4px; }
.doc { background: #3c3d54; color: #fff; }
.doc::after {
  content: "";
  position: absolute;
  top: 100%;
  left: 50%;
  margin-left: -15px;
  border: 15px solid transparent;
  border-top: 10px solid #3c3d54;
  border-bottom: 0;
}
.pbv { background: #dbe5ef; color: #9c9ca0; }
.ann { background: #a7c0dc; }
.info { display: flex; gap: 1px; margin: 17px 0 0; }
.note { overflow: hidden; padding: 4px; border: 1px solid #a0a0a0; border-bottom: 0; background: #ffffe1; }
.note h5 { height: 30px; padding: 0 6px; background: #99b4d1; font-size: 14px; line-height: 30px; }
.note p { padding: 10px 6px; }
.note table { width: 100%; margin: 10px 0; border-collapse: collapse; table-layout: fixed; }
.note th { width: 149px; padding: 0 0 0 6px; font-weight: 400; text-align: left; white-space: nowrap; }
.note th b { font-style: italic; }
.note td { padding: 0; }
.note .short th { width: 49px; }
```
